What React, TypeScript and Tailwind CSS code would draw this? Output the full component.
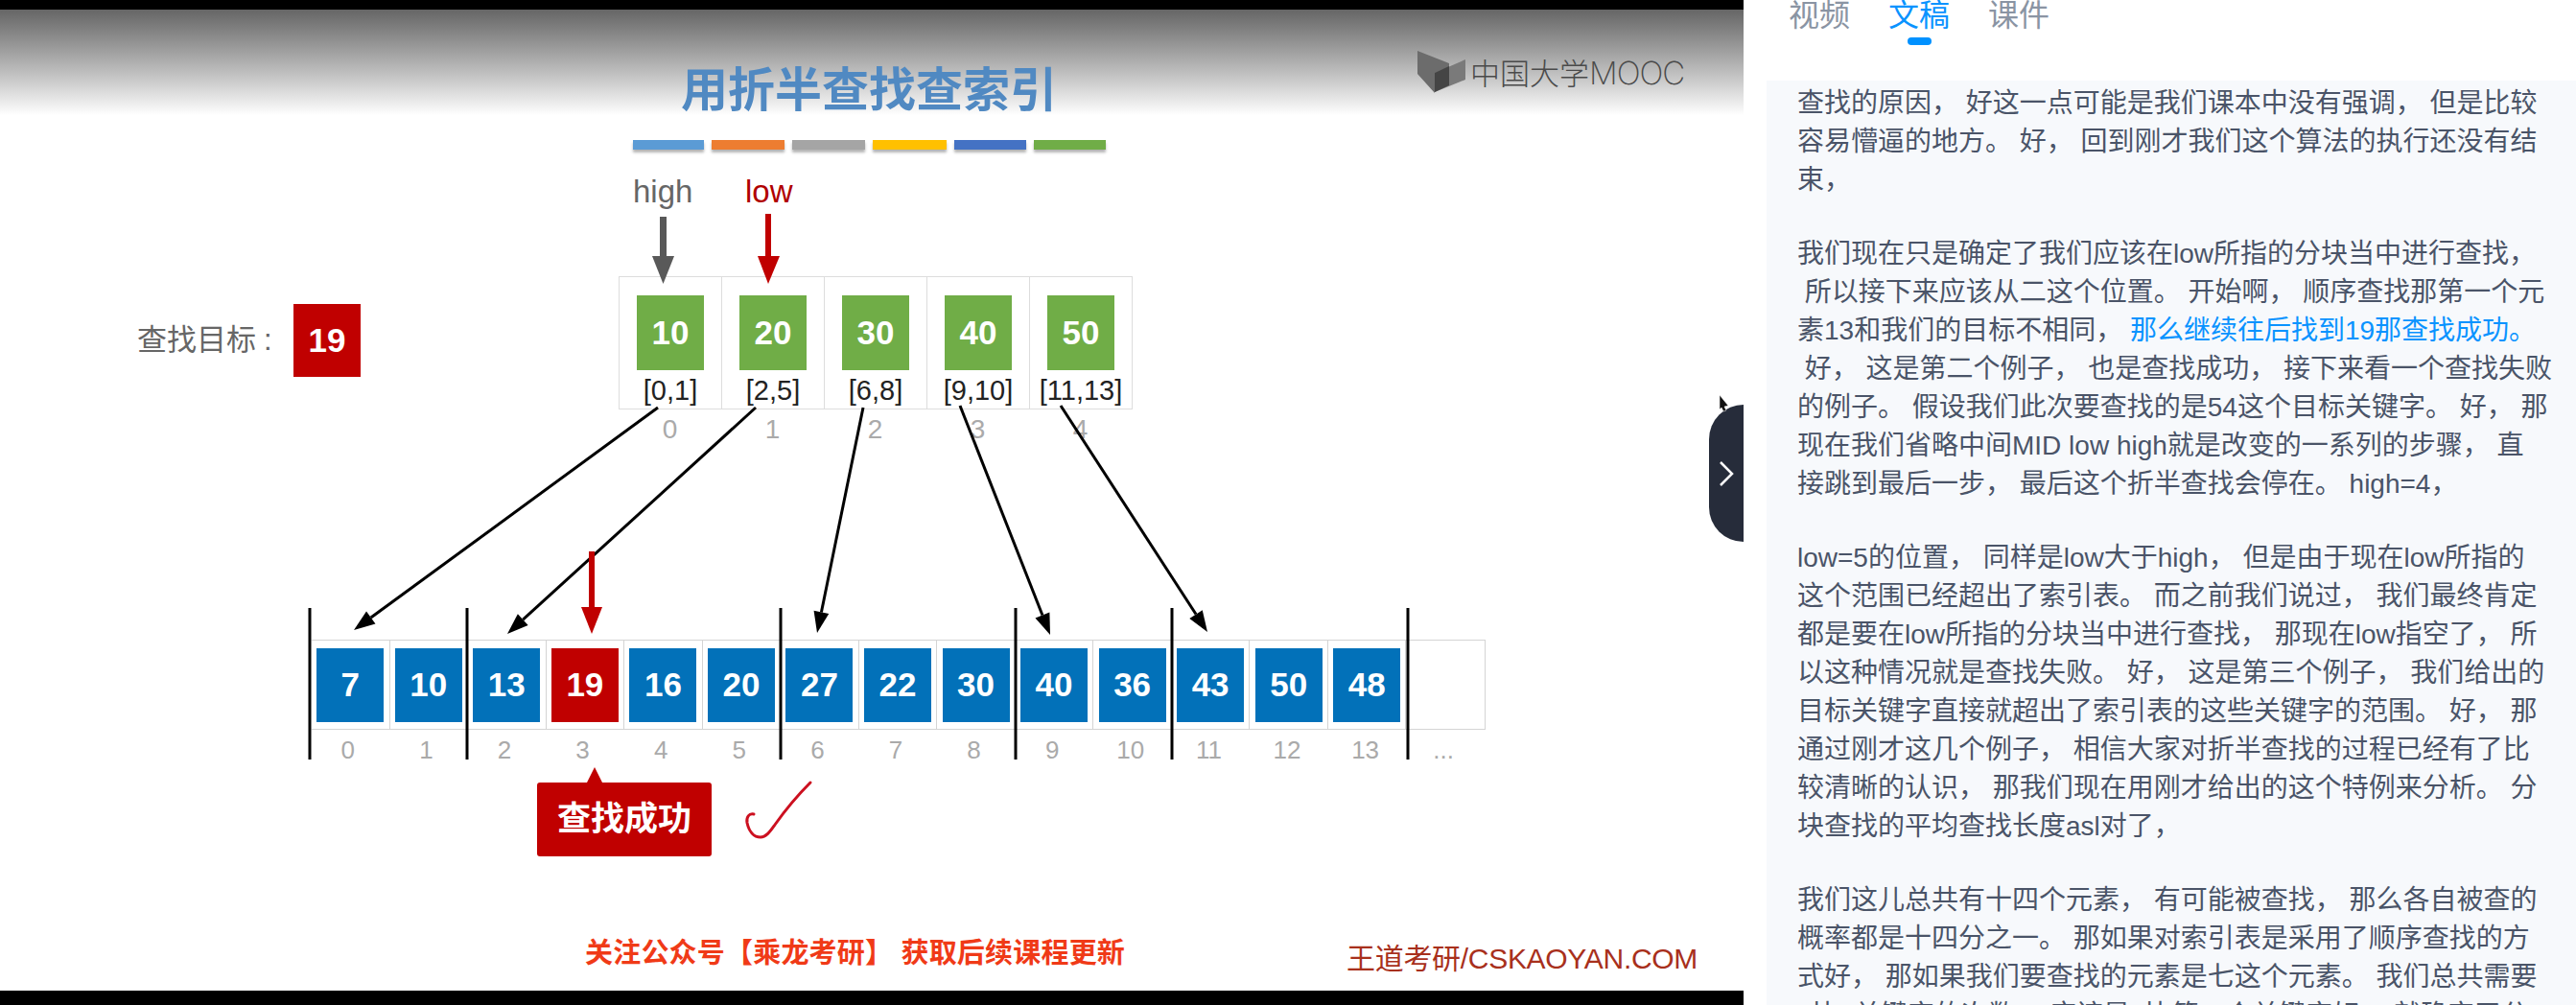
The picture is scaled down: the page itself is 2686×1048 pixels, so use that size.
const bars = [
  { w: 'w-[74px]', bg: 'bg-[#5b9bd5]' },
  { w: 'w-[76px]', bg: 'bg-[#ed7d31]' },
  { w: 'w-[76px]', bg: 'bg-[#a5a5a5]' },
  { w: 'w-[77px]', bg: 'bg-[#ffc000]' },
  { w: 'w-[75px]', bg: 'bg-[#4472c4]' },
  { w: 'w-[75px]', bg: 'bg-[#70ad47]' },
];

const indexTable = [
  { key: '10', range: '[0,1]' },
  { key: '20', range: '[2,5]' },
  { key: '30', range: '[6,8]' },
  { key: '40', range: '[9,10]' },
  { key: '50', range: '[11,13]' },
];

const values = ['7', '10', '13', '19', '16', '20', '27', '22', '30', '40', '36', '43', '50', '48', ''];
const indexes = ['0', '1', '2', '3', '4', '5', '6', '7', '8', '9', '10', '11', '12', '13', '...'];

const links = [
  [686, 425, 369, 657],
  [788, 425, 529, 661],
  [900, 425, 852, 660],
  [1001, 423, 1095, 662],
  [1106, 423, 1259, 659],
];

const dividers = [323, 487, 814, 1059, 1222, 1468];

const paragraphs = [
  [
    '查找的原因， 好这一点可能是我们课本中没有强调， 但是比较',
    '容易懵逼的地方。 好， 回到刚才我们这个算法的执行还没有结',
    '束，',
  ],
  [
    '我们现在只是确定了我们应该在low所指的分块当中进行查找，',
    ' 所以接下来应该从二这个位置。 开始啊， 顺序查找那第一个元',
    'HIGHLIGHT',
    ' 好， 这是第二个例子， 也是查找成功， 接下来看一个查找失败',
    '的例子。 假设我们此次要查找的是54这个目标关键字。 好， 那',
    '现在我们省略中间MID low high就是改变的一系列的步骤， 直',
    '接跳到最后一步， 最后这个折半查找会停在。 high=4，',
  ],
  [
    'low=5的位置， 同样是low大于high， 但是由于现在low所指的',
    '这个范围已经超出了索引表。 而之前我们说过， 我们最终肯定',
    '都是要在low所指的分块当中进行查找， 那现在low指空了， 所',
    '以这种情况就是查找失败。 好， 这是第三个例子， 我们给出的',
    '目标关键字直接就超出了索引表的这些关键字的范围。 好， 那',
    '通过刚才这几个例子， 相信大家对折半查找的过程已经有了比',
    '较清晰的认识， 那我们现在用刚才给出的这个特例来分析。 分',
    '块查找的平均查找长度asl对了，',
  ],
  [
    '我们这儿总共有十四个元素， 有可能被查找， 那么各自被查的',
    '概率都是十四分之一。 那如果对索引表是采用了顺序查找的方',
    '式好， 那如果我们要查找的元素是七这个元素。 我们总共需要',
    '7比1关键字的次数， 应该是7比第一个关键字好， 就确定了分',
  ],
];

const sans = "font-['Liberation_Sans','Noto_Sans_CJK_SC',sans-serif]";

function LinkArrow({ x1, y1, x2, y2 }: { x1: number; y1: number; x2: number; y2: number }) {
  const len = Math.hypot(x2 - x1, y2 - y1);
  const ux = (x2 - x1) / len;
  const uy = (y2 - y1) / len;
  const bx = x2 - ux * 22;
  const by = y2 - uy * 22;
  const head = `${x2},${y2} ${bx - uy * 8},${by + ux * 8} ${bx + uy * 8},${by - ux * 8}`;
  return (
    <g>
      <line x1={x1} y1={y1} x2={bx} y2={by} stroke="#000" strokeWidth="3" />
      <polygon points={head} fill="#000" />
    </g>
  );
}

function DiagramOverlay() {
  return (
    <svg className="absolute inset-0 pointer-events-none" width="1818" height="1023" viewBox="0 10 1818 1023">
      {/* high / low pointers */}
      <rect x="688" y="226" width="7" height="42" fill="#595959" />
      <polygon points="680,267 703,267 691.5,296" fill="#595959" />
      <rect x="798" y="223" width="6" height="45" fill="#c00000" />
      <polygon points="790,267 813,267 801,296" fill="#c00000" />

      {links.map(([x1, y1, x2, y2]) => (
        <LinkArrow key={x1} x1={x1} y1={y1} x2={x2} y2={y2} />
      ))}

      {dividers.map((x) => (
        <rect key={x} x={x - 1.5} y="634" width="3" height="158" fill="#000" />
      ))}

      <rect x="614" y="575" width="6" height="60" fill="#c00000" />
      <polygon points="606,633 628,633 617,661" fill="#c00000" />

      {/* hand drawn tick */}
      <path
        d="M786 849 C781 848 778 852 779 858 C781 867 786 873 793 873 C799 873 803 867 808 860 C820 843 833 828 845 816"
        fill="none"
        stroke="#cc1020"
        strokeWidth="3"
        strokeLinecap="round"
      />

      {/* mouse pointer */}
      <polygon points="1793,412 1802,423 1798,424 1800,428 1797,429 1795,425 1793,427" fill="#111" stroke="#fff" strokeWidth="0.5" />
    </svg>
  );
}

function MoocLogo() {
  return (
    <div className="flex items-center ml-[376px] mt-[43px] h-[44px]">
      <svg width="50" height="44" viewBox="0 0 50 44">
        <polygon points="0,0 33,13 33,34 18,34 18,44 0,24" fill="#6c6c6c" />
        <polygon points="18,23 50,9 50,30 18,43" fill="#7a7a7a" />
        <polygon points="18,23 33,16 33,36 18,43" fill="#454545" />
      </svg>
      <span className="ml-[5px] text-[31px] leading-[30px] font-light text-[#4a4a4a] whitespace-nowrap font-['Noto_Sans_CJK_SC',sans-serif]">
        中国大学
        <span className="font-['Inter',sans-serif] text-[33px] font-extralight tracking-[-1px]">MOOC</span>
      </span>
    </div>
  );
}

function Slide() {
  return (
    <div className={`relative flex-1 flex flex-col bg-white ${sans}`}>
      <div className="flex items-start h-[110px] bg-gradient-to-b from-[#666] to-white">
        <h1 className="ml-[710px] mt-[55px] text-[49px] leading-[50px] font-semibold whitespace-nowrap text-[#5089c2] font-['Noto_Sans_CJK_SC',sans-serif]">
          用折半查找查索引
        </h1>
        <MoocLogo />
      </div>

      <div className="flex gap-2 h-[10px] ml-[660px] mt-[26px]">
        {bars.map((bar) => (
          <div key={bar.bg} className={`${bar.w} ${bar.bg} shadow-[0_3px_3px_rgba(0,0,0,0.3)]`} />
        ))}
      </div>

      <div className="flex ml-[660px] mt-[24px] text-[33px] leading-[40px]">
        <span className="w-[117px] text-[#666]">high</span>
        <span className="text-[#b00000]">low</span>
      </div>

      <div className="flex mt-[68px]">
        <div className="flex items-center w-[645px] h-[139px] pl-[143px] pb-[5px]">
          <span className="w-[163px] text-[31px] text-[#666]">
            查找目标<span className="ml-[8px]">:</span>
          </span>
          <div className="flex items-center justify-center w-[70px] h-[76px] bg-[#c00000] text-white text-[35px] font-bold">19</div>
        </div>
        <div className="flex border-y border-l border-[#ddd]">
          {indexTable.map((item) => (
            <div key={item.key} className="flex flex-col items-center w-[107px] h-[137px] pt-[19px] border-r border-[#ddd]">
              <div className="flex items-center justify-center w-[70px] h-[78px] bg-[#70ad47] text-white text-[35px] font-bold">
                {item.key}
              </div>
              <span className="mt-[3px] text-[29px] leading-[36px] text-[#222]">{item.range}</span>
            </div>
          ))}
        </div>
      </div>

      <div className="flex ml-[645px] mt-[7px]">
        {indexTable.map((item, i) => (
          <span key={item.key} className="w-[107px] text-center text-[28px] leading-[28px] text-[#aaa]">{i}</span>
        ))}
      </div>

      <div className="grid grid-cols-15 w-[1224px] h-[94px] ml-[325px] mt-[205px] border-y border-r border-[#d4d4d4]">
        {values.map((value, i) => (
          <div key={i} className="flex items-center justify-center border-r border-[#d4d4d4] last:border-r-0">
            {value && (
              <div className={`flex items-center justify-center w-[70px] h-[77px] text-white text-[35px] font-bold ${i === 3 ? 'bg-[#c00000]' : 'bg-[#0271b9]'}`}>
                {value}
              </div>
            )}
          </div>
        ))}
      </div>

      <div className="grid grid-cols-15 w-[1224px] ml-[322px] mt-[8px]">
        {indexes.map((n) => (
          <span key={n} className="text-center text-[26px] leading-[26px] text-[#aaa]">{n}</span>
        ))}
      </div>

      <div className="relative flex items-center justify-center w-[182px] h-[77px] ml-[560px] mt-[21px] rounded-[3px] bg-[#c00000] text-white text-[35px] font-bold">
        <div className="absolute -top-[16px] left-[52px] w-0 h-0 border-x-[8px] border-b-[16px] border-x-transparent border-b-[#c00000]" />
        查找成功
      </div>

      <div className="flex items-start ml-[610px] mt-[83px]">
        <span className="w-[794px] text-[29px] leading-[36px] font-bold tracking-[0.2px] text-[#f03a17] whitespace-pre">关注公众号【乘龙考研】 获取后续课程更新</span>
        <span className="mt-[7px] text-[30px] leading-[34px] tracking-[-0.3px] text-[#a8301c] whitespace-nowrap">王道考研/CSKAOYAN.COM</span>
      </div>

      <div className="absolute right-0 top-[412px] flex items-center justify-center w-[36px] h-[143px] rounded-l-[36px] bg-[#262c3a]">
        <svg width="16" height="26" viewBox="0 0 16 26">
          <path d="M2 1 L14 13 L2 25" fill="none" stroke="#fff" strokeWidth="2.5" />
        </svg>
      </div>

      <DiagramOverlay />
    </div>
  );
}

function TranscriptLine({ text }: { text: string }) {
  if (text === 'HIGHLIGHT') {
    return (
      <p className="whitespace-pre">
        素13和我们的目标不相同， <span className="text-[#0a93ff]">那么继续往后找到19那查找成功。</span>
      </p>
    );
  }
  return <p className="whitespace-pre">{text}</p>;
}

function Transcript() {
  return (
    <div className="flex flex-col w-[868px] bg-white">
      <div className="flex items-start gap-[40px] h-[84px] pl-[47px] text-[32px] leading-[32px] text-[#8a94a3] font-['Noto_Sans_CJK_SC',sans-serif]">
        <span className="-mt-[3px]">视频</span>
        <div className="flex flex-col items-center -mt-[3px] text-[#0a93ff]">
          <span>文稿</span>
          <div className="w-[25px] h-[8px] mt-[10px] rounded-full bg-[#0091ff]" />
        </div>
        <span className="-mt-[3px]">课件</span>
      </div>
      <div className={`flex-1 ml-[24px] pt-[4px] pl-[32px] bg-[#f7f9fc] overflow-hidden text-[28px] leading-[40px] text-[#4a5468] ${sans}`}>
        {paragraphs.map((lines, i) => (
          <div key={i} className="mb-[37px]">
            {lines.map((line) => (
              <TranscriptLine key={line} text={line} />
            ))}
          </div>
        ))}
      </div>
    </div>
  );
}

export default function App() {
  return (
    <div className="flex w-[2686px] h-[1048px] overflow-hidden bg-white">
      <div className="flex flex-col w-[1818px] bg-black pt-[10px] pb-[15px]">
        <Slide />
      </div>
      <Transcript />
    </div>
  );
}
